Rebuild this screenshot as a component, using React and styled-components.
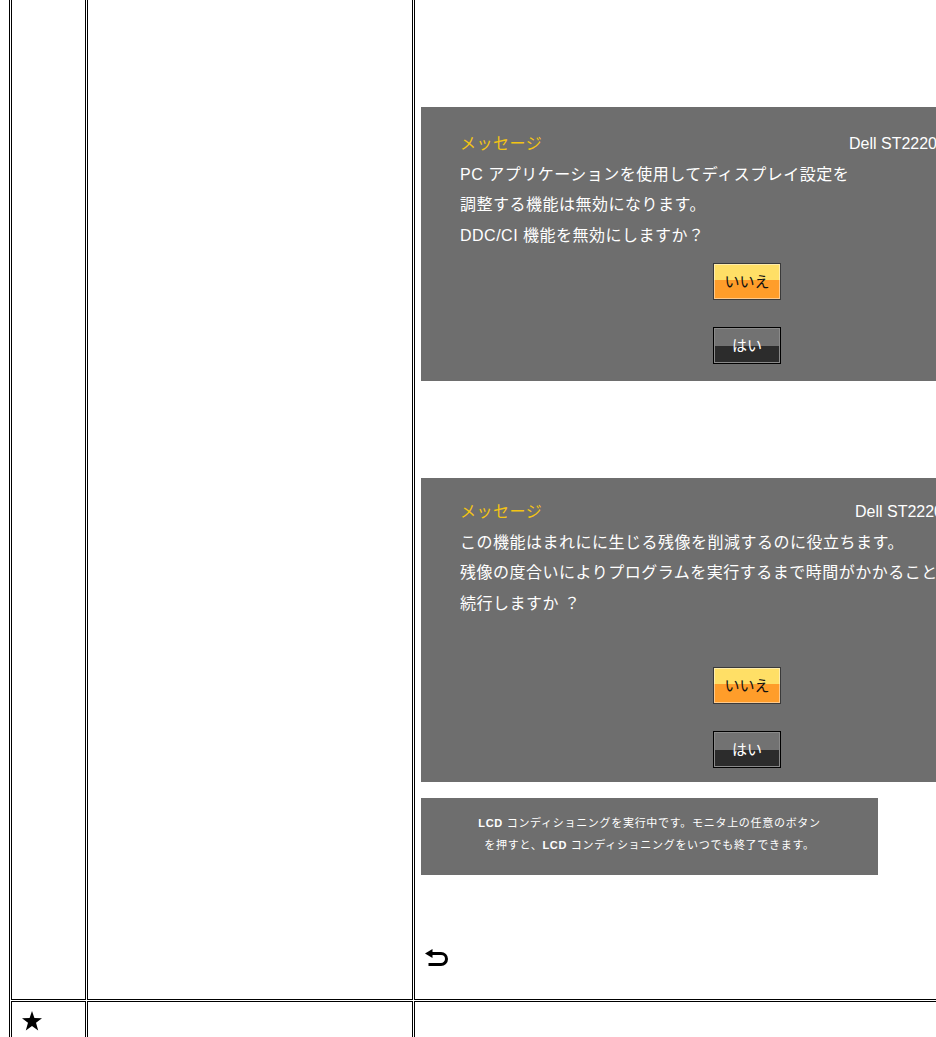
import React from 'react';
import styled, { createGlobalStyle } from 'styled-components';

const GlobalStyle = createGlobalStyle`
    html, body {
        margin: 0;
        padding: 0;
        background: #fff;
        overflow: hidden;
    }
    body {
        font-family: "Liberation Sans", "Noto Sans CJK JP", sans-serif;
    }
`;

const Grid = styled.div`
    display: grid;
    grid-template-columns: 75px 326px 560px;
    gap: 1px;
    padding: 1px;
    border: 1px solid #000;
    width: max-content;
    margin: -10px 0 0 9px;
`;

const Cell = styled.div`
    box-sizing: border-box;
    border: 1px solid #000;
    min-height: 60px;
    padding: ${props => props.$pad || '0'};
`;

const Panel = styled.div`
    box-sizing: border-box;
    width: ${props => props.$w}px;
    margin-top: ${props => props.$mt || 0}px;
    padding: ${props => props.$top}px 0 ${props => props.$bottom}px 39px;
    background: #6e6e6e;
    overflow: hidden;
    font-size: 16px;
    line-height: 30.5px;
`;

const TitleRow = styled.div`
    display: flex;
    justify-content: space-between;
    padding-right: 20px;
`;

const Title = styled.span`
    color: #f3c414;
    letter-spacing: 0.5px;
`;

const Model = styled.span`
    color: #fff;
    font-family: "Liberation Sans", sans-serif;
`;

const Line = styled.div`
    color: #fff;
    letter-spacing: 0.5px;
    white-space: nowrap;
`;

const ButtonStack = styled.div`
    display: flex;
    flex-direction: column;
    gap: 27px;
    margin: ${props => props.$mt}px 0 0 253px;
`;

const OsdButton = styled.div`
    box-sizing: border-box;
    width: 68px;
    height: 37px;
    display: flex;
    align-items: center;
    justify-content: center;
    font-size: 15px;
    line-height: 1;
    border: 1px solid ${props => (props.$primary ? '#3a3a3a' : '#000')};
    box-shadow: inset 0 0 0 1px ${props => (props.$primary ? 'rgba(255,255,255,0.45)' : '#8a8a8a')};
    color: ${props => (props.$primary ? '#111' : '#fff')};
    background: ${props =>
        props.$primary
            ? 'linear-gradient(to bottom, #ffdf66 0%, #ffdf66 45%, #ff9d2a 45%, #ff9d2a 100%)'
            : 'linear-gradient(to bottom, #727272 0%, #727272 52%, #2c2c2c 52%, #2c2c2c 100%)'};
`;

const Notice = styled.div`
    box-sizing: border-box;
    width: 457px;
    margin-top: 16px;
    padding: 14px 0 19px;
    background: #6e6e6e;
    color: #fff;
    text-align: center;
    font-size: 11px;
    line-height: 22px;
    letter-spacing: 0.7px;

    b {
        font-weight: bold;
    }
`;

const ReturnIcon = styled.svg`
    display: block;
    margin: 74px 0 0 4px;
`;

const Dialog = ({ width, top, bottom, mt, gap, lines }) => (
    <Panel $w={width} $top={top} $bottom={bottom} $mt={mt}>
        <TitleRow>
            <Title>メッセージ</Title>
            <Model>Dell ST2220</Model>
        </TitleRow>
        {lines.map(text => (
            <Line key={text}>{text}</Line>
        ))}
        <ButtonStack $mt={gap}>
            <OsdButton $primary>いいえ</OsdButton>
            <OsdButton>はい</OsdButton>
        </ButtonStack>
    </Panel>
);

const Star = () => (
    <svg width="20" height="20" viewBox="0 0 20 20">
        <polygon
            points="10,0 12.4,7 20,7.2 14,11.8 16.2,19.5 10,15 3.8,19.5 6,11.8 0,7.2 7.6,7"
            fill="#000"
        />
    </svg>
);

export default function App() {
    return (
        <>
            <GlobalStyle />
            <Grid>
                <Cell />
                <Cell />
                <Cell $pad="114px 0 32px 6px">
                    <Dialog
                        width={536}
                        top={22}
                        bottom={17}
                        gap={12}
                        lines={[
                            'PC アプリケーションを使用してディスプレイ設定を',
                            '調整する機能は無効になります。',
                            'DDC/CI 機能を無効にしますか？',
                        ]}
                    />
                    <Dialog
                        width={542}
                        mt={97}
                        top={19}
                        bottom={14}
                        gap={48}
                        lines={[
                            'この機能はまれにに生じる残像を削減するのに役立ちます。',
                            '残像の度合いによりプログラムを実行するまで時間がかかることがあります。',
                            '続行しますか ？',
                        ]}
                    />
                    <Notice>
                        <b>LCD</b> コンディショニングを実行中です。モニタ上の任意のボタン
                        <br />
                        を押すと、<b>LCD</b> コンディショニングをいつでも終了できます。
                    </Notice>
                    <ReturnIcon width="24" height="18" viewBox="0 0 24 18">
                        <polygon points="0,4.5 7.5,0 7.5,9" fill="#000" />
                        <path
                            d="M6 4.5 H16 A5.5 5.5 0 0 1 16 15.5 H3.5"
                            fill="none"
                            stroke="#000"
                            strokeWidth="3"
                        />
                    </ReturnIcon>
                </Cell>
                <Cell $pad="9px 0 0 10px">
                    <Star />
                </Cell>
                <Cell />
                <Cell />
            </Grid>
        </>
    );
}
